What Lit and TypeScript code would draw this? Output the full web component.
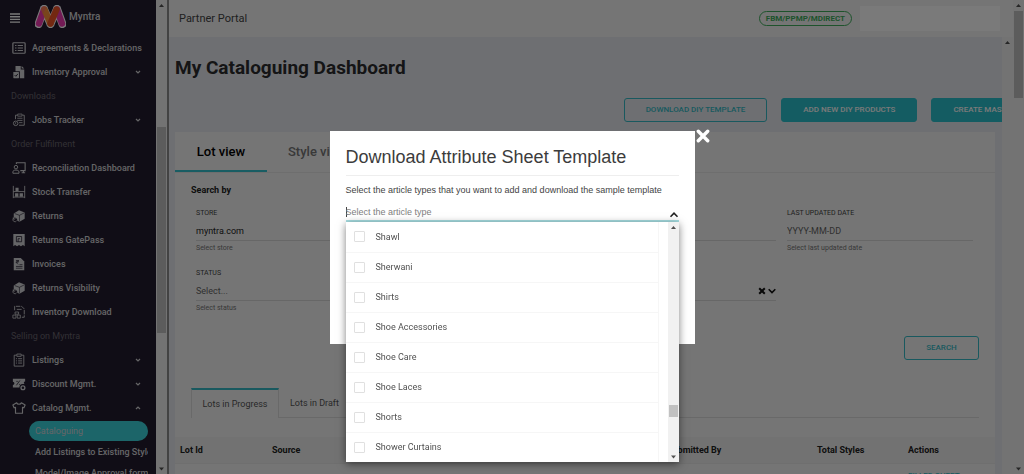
import { LitElement, html, svg, css, nothing } from "lit";
import { customElement, property } from "lit/decorators.js";

const icons: Record<string, unknown> = {
  list: svg`<rect x="1" y="2" width="14" height="12" rx="1" fill="none" stroke="currentColor" stroke-width="1.4"/><path d="M3.5 5.2h1.6M6.5 5.2h6M3.5 8h1.6M6.5 8h6M3.5 10.8h1.6M6.5 10.8h6" stroke="currentColor" stroke-width="1.3"/>`,
  approval: svg`<path d="M4 1h6v4h4v10H9V7H4z" fill="currentColor"/><path d="M11 1l3 3h-3z" fill="currentColor"/><rect x="1.5" y="8" width="6.5" height="7" rx=".6" fill="currentColor"/><path d="M3 11.5l1.4 1.4 2.4-2.8" fill="none" stroke="#231d2e"/>`,
  jobs: svg`<path d="M4 7V2.5h2M12 2.5h2V14H8" fill="none" stroke="currentColor"/><path d="M6.5 1.2h5v2.4h-5zM6 6h6M6 8.5h6M8 11h4" fill="none" stroke="currentColor" stroke-width=".9"/><circle cx="4.2" cy="11.8" r="2.6" fill="none" stroke="currentColor"/><path d="M4.2 10.4v1.6l-1.2.8" fill="none" stroke="currentColor" stroke-width=".8"/>`,
  board: svg`<path d="M5 3.5V2h10v9H9.5M11 13.5h4M13 11v2.5" fill="none" stroke="currentColor" stroke-width="1.2"/><circle cx="4.5" cy="7" r="2" fill="none" stroke="currentColor" stroke-width="1.1"/><path d="M1 14v-1.4c0-1.6 1.4-2.2 3.5-2.2S8 11 8 12.6V14z" fill="none" stroke="currentColor" stroke-width="1.1"/>`,
  stock: svg`<path d="M1.5 1v14M14.5 1v14M1.5 7.5h13M1.5 13.8h13" fill="none" stroke="currentColor" stroke-width="1"/><path d="M4 3h3.5v4H4zM3.5 9.5h3.8v3.8H3.5zM8.7 9.5h3.8v3.8H8.7z" fill="currentColor"/>`,
  box: svg`<path d="M2 5l6-3.5L14.5 4v7L8.5 14.5 6 13.5a3.4 3.4 0 0 0-4-4z" fill="currentColor"/><path d="M3 5.2l5.5 2 5.5-2.8M8.5 7.2v7" fill="none" stroke="#231d2e" stroke-width=".7"/><path d="M4.8 10.5a2.3 2.3 0 1 0 .4 3M1.5 9.5v2h2" fill="none" stroke="currentColor" stroke-width=".9"/>`,
  gate: svg`<path d="M1.5 1h13v14l-2-1.3-2.3 1.3L8 13.7 5.8 15l-2.3-1.3-2 1.3z" fill="currentColor"/><path d="M5 4h6v6H5zM7 10V6.5h2" fill="none" stroke="#231d2e" stroke-width=".9"/>`,
  invoice: svg`<path d="M2 1h8l4 4v10H2z" fill="currentColor"/><path d="M4.5 4h3.5M4.5 5.5h3.5M7 4c0 3-2.5 2-2.5 2L7 8.5M8.5 8.8h3.5M4.5 10.8h7.5M4.5 12.8h7.5" fill="none" stroke="#231d2e" stroke-width=".8"/>`,
  download: svg`<path d="M3 6V1.5h8l3 3V14h-3" fill="none" stroke="currentColor" stroke-width="1" stroke-dasharray="5 1"/><path d="M5.5 5h5.5" stroke="currentColor" stroke-width="1"/><path d="M3.5 8h4v2.5h-4zM1 11.5h3.5V15H1zM6 11.5h3.5V15H6z" fill="none" stroke="currentColor" stroke-width=".9"/>`,
  clip: svg`<path d="M5 2.5H2.5v12.5h11V2.5H11" fill="none" stroke="currentColor"/><path d="M5.5 1.2h5v2.6h-5z" fill="none" stroke="currentColor"/><path d="M4.5 6.5h1.2M7 6.5h4.5M4.5 9h1.2M7 9h4.5M4.5 11.5h1.2M7 11.5h4.5" stroke="currentColor"/>`,
  discount: svg`<path d="M1 2h14v3a1.5 1.5 0 0 0 0 3h-3a4 4 0 0 0-3.5 4H1V9a1.5 1.5 0 0 0 0-3.5z" fill="currentColor"/><path d="M5 9.5l4-5.5M5 5h1.5M8.2 8.5h1" stroke="#231d2e" stroke-width=".9"/><circle cx="12.5" cy="12.3" r="2.2" fill="none" stroke="currentColor" stroke-width="1.5"/>`,
  shirt: svg`<path d="M5.3 2L1 4.5l1.4 3.3L4 7.3V14h8V7.3l1.6.5L15 4.5 10.7 2C10 4.3 6 4.3 5.3 2z" fill="none" stroke="currentColor" stroke-width="1.3" stroke-linejoin="round"/>`,
};

type NavRow = { heading?: string; label?: string; icon?: string; chevron?: "down" | "up" };

const NAV: NavRow[] = [
  { label: "Agreements & Declarations", icon: "list" },
  { label: "Inventory Approval", icon: "approval", chevron: "down" },
  { heading: "Downloads" },
  { label: "Jobs Tracker", icon: "jobs", chevron: "down" },
  { heading: "Order Fulfilment" },
  { label: "Reconciliation Dashboard", icon: "board" },
  { label: "Stock Transfer", icon: "stock" },
  { label: "Returns", icon: "box" },
  { label: "Returns GatePass", icon: "gate" },
  { label: "Invoices", icon: "invoice" },
  { label: "Returns Visibility", icon: "box" },
  { label: "Inventory Download", icon: "download" },
  { heading: "Selling on Myntra" },
  { label: "Listings", icon: "clip", chevron: "down" },
  { label: "Discount Mgmt.", icon: "discount", chevron: "down" },
  { label: "Catalog Mgmt.", icon: "shirt", chevron: "up" },
];

const ARTICLES = [
  "Shawl", "Sherwani", "Shirts", "Shoe Accessories",
  "Shoe Care", "Shoe Laces", "Shorts", "Shower Curtains",
];

const chevron = (dir: "down" | "up") => html`
  <svg class="chevron" viewBox="0 0 8 8" aria-hidden="true">
    <path d=${dir === "down" ? "M2 3l2 2 2-2" : "M2 5l2-2 2 2"}
      fill="none" stroke="currentColor" stroke-width="1.2" />
  </svg>`;

const base = css`
  *, *::before, *::after { box-sizing: border-box; }
  a { color: inherit; text-decoration: none; }
  button, input { font: inherit; color: inherit; margin: 0; }
`;

@customElement("scroll-rail")
class ScrollRail extends LitElement {
  @property({ type: Number }) before = 0;
  @property({ type: Number }) thumb = 0;
  @property({ type: Number }) after = 1;
  @property({ type: Boolean }) down = false;

  static styles = css`
    :host { display: flex; flex-direction: column; width: 11px; flex: none; background: #f1f1f1; }
    svg { width: 11px; height: 11px; flex: none; fill: #505050; }
    .track { flex: 1; display: flex; flex-direction: column; padding: 0 1px; }
    .thumb { background: #c1c1c1; }
  `;

  render() {
    return html`
      <svg viewBox="0 0 11 11"><path d="M3 7l2.5-3L8 7z" /></svg>
      <div class="track">
        <div style="flex:${this.before}"></div>
        <div class="thumb" style="flex:${this.thumb}"></div>
        <div style="flex:${this.after}"></div>
      </div>
      ${this.down ? html`<svg viewBox="0 0 11 11"><path d="M3 4.5l2.5 3 2.5-3z" /></svg>` : nothing}`;
  }
}

@customElement("side-nav")
class SideNav extends LitElement {
  static styles = [base, css`
    :host { display: flex; min-height: 0; background: #231d2e; color: #d4d4d8; font-size: 9px; font-weight: 500; }
    nav { flex: 1; min-width: 0; overflow: hidden; }
    .brand { display: flex; align-items: center; height: 36px; padding: 0 0 4px 10px; font-size: 10px; }
    .menu { width: 10px; height: 10px; padding: 0; border: 0; background: none; display: flex; margin-top: 4px; }
    .menu svg { width: 10px; height: 10px; }
    .logo { width: 31px; height: 23px; margin: 0 3px 0 15px; }
    .row { display: flex; align-items: center; height: 24px; padding: 0 14px 0 12px; white-space: nowrap; }
    .row span { flex: 1; }
    .icon { width: 14px; height: 14px; margin-right: 6px; flex: none; }
    .chevron { width: 8px; height: 8px; }
    .heading { height: 24px; line-height: 24px; padding-left: 11px; color: #69646f; font-weight: 400; }
    .sub { padding: 1px 8px 0 29px; }
    .sub a { display: block; height: 20px; line-height: 20px; margin-bottom: 1px; padding-left: 6px; overflow: hidden; white-space: nowrap; }
    .sub a.active { border-radius: 10px; background: #3bd3dc; font-weight: 400; }
  `];

  render() {
    return html`
      <nav>
        <div class="brand">
          <button class="menu" aria-label="Menu">
            <svg viewBox="0 0 10 10"><path d="M0 1h10M0 3.7h10M0 6.4h10M0 9.1h10" stroke="#fff" stroke-width="1.4" /></svg>
          </button>
          <svg class="logo" viewBox="0 0 31 23" aria-hidden="true">
            <path d="M3.5 19L9 4M9 4l6.5 15M15.5 19L22 4M22 4l5.5 15" stroke="#fff" stroke-width="8" stroke-linecap="round" stroke-linejoin="round" fill="none" />
            <path d="M4 18.5L9 4.5" stroke="#f13ab1" stroke-width="6.4" stroke-linecap="round" />
            <path d="M27 18.5L22 4.5" stroke="#f13ab1" stroke-width="6.4" stroke-linecap="round" />
            <path d="M9.5 4.5L15.5 18.5" stroke="#fd913c" stroke-width="6.4" stroke-linecap="round" />
            <path d="M21.5 4.5L15.5 18.5" stroke="#f05524" stroke-width="6.4" stroke-linecap="round" />
            <path d="M6.5 4q2-3 5-1.5L8 9z" fill="#f9775a" />
          </svg>
          Myntra
        </div>
        ${NAV.map((r) => r.heading
          ? html`<div class="heading">${r.heading}</div>`
          : html`<a class="row" href="#">
              <svg class="icon" viewBox="0 0 16 16" aria-hidden="true">${icons[r.icon!]}</svg>
              <span>${r.label}</span>${r.chevron ? chevron(r.chevron) : nothing}
            </a>`)}
        <div class="sub">
          <a class="active" href="#">Cataloguing</a>
          <a href="#">Add Listings to Existing Styles</a>
          <a href="#">Model/Image Approval form</a>
        </div>
      </nav>
      <scroll-rail .before=${116} .thumb=${206} .after=${130} down></scroll-rail>`;
  }
}

@customElement("catalogue-dashboard")
class CatalogueDashboard extends LitElement {
  static styles = [base, css`
    :host { display: block; min-width: 0; overflow: hidden; padding: 0 7px 0 6px; background: #e6e9ee; font-size: 9px; color: #3a3a3a; }
    h1 { margin: 0; padding-top: 19px; font-size: 19px; line-height: 24px; font-weight: 700; color: #2c2c2e; }
    .actions { display: flex; justify-content: flex-end; gap: 14px; margin: 18px -43px 10px 0; }
    .btn { flex: none; height: 24px; padding: 0 21px 2px; border: 1px solid #35bac6; border-radius: 3px; background: none; color: #35bac6; font-size: 8px; font-weight: 500; white-space: nowrap; }
    .btn.solid { background: #2bc0cc; border-color: #2bc0cc; color: #fff; }
    .card { background: #f5f5f5; }
    .views { display: flex; border-bottom: 1px solid #e6e6e6; }
    .views button { height: 40px; padding: 0 21px; border: 0; border-bottom: 2px solid transparent; background: none; font-size: 13px; font-weight: 500; color: #777; }
    .views button.active { min-width: 92px; border-color: #35c3cf; color: #000; }
    form { padding: 10px 16px 0 16px; }
    h2 { margin: 0 0 12px; font-size: 9px; line-height: 14px; font-weight: 700; color: #222; }
    .fields { display: grid; grid-template-columns: repeat(4, 1fr); column-gap: 11px; padding: 0 6px 0 5px; }
    .field { height: 60px; }
    .field label { display: block; height: 9px; line-height: 9px; font-size: 7px; color: #444; }
    .control { display: flex; align-items: center; gap: 2px; height: 23px; padding-top: 4px; border-bottom: 1px solid #d8d8d8; color: #222; }
    .control input { flex: 1; min-width: 0; width: 100%; height: 18px; padding: 0; border: 0; background: none; outline: none; }
    .control input::placeholder { color: #666; opacity: 1; }
    .control svg { width: 8px; height: 8px; }
    .hint { height: 14px; line-height: 14px; font-size: 7px; color: #777; }
    .submit { display: flex; justify-content: flex-end; padding-top: 7px; }
    .submit .btn { width: 75px; }
    .lots { display: flex; height: 30px; margin: 28px 16px 19px 16px; border-bottom: 1px solid #dcdcdc; }
    .lots button { padding: 0 11px; border: 0; background: none; height: 30px; color: #555; }
    .lots button.active { padding: 0 9px; border: 1px solid #dcdcdc; border-top: 2px solid #35bac6; border-bottom: 0; background: #f5f5f5; width: 88px; }
    table { width: 100%; border-collapse: collapse; table-layout: fixed; }
    th { height: 26px; padding: 0 5px; background: #efefef; border-bottom: 1px solid #e8e8e8; text-align: left; font-weight: 700; color: #222; }
    td { padding: 5px; height: 24px; font-size: 8px; font-weight: 500; color: #35bac6; }
    .w-id { width: 92px; } .w-by { width: 150px; } .w-total { width: 91px; } .w-act { width: 92px; }
  `];

  render() {
    return html`
      <h1>My Cataloguing Dashboard</h1>
      <div class="actions">
        <button class="btn">DOWNLOAD DIY TEMPLATE</button>
        <button class="btn solid">ADD NEW DIY PRODUCTS</button>
        <button class="btn solid">CREATE MASTER</button>
      </div>
      <section class="card">
        <div class="views"><button class="active">Lot view</button><button>Style view</button></div>
        <form>
          <h2>Search by</h2>
          <div class="fields">
            <div class="field">
              <label for="store">STORE</label>
              <div class="control"><input id="store" value="myntra.com" /></div>
              <div class="hint">Select store</div>
            </div>
            <div class="field"></div>
            <div class="field">
              <label></label><div class="control"></div>
            </div>
            <div class="field">
              <label for="updated">LAST UPDATED DATE</label>
              <div class="control"><input id="updated" placeholder="YYYY-MM-DD" /></div>
              <div class="hint">Select last updated date</div>
            </div>
            <div class="field">
              <label for="status">STATUS</label>
              <div class="control"><input id="status" placeholder="Select..." /></div>
              <div class="hint">Select status</div>
            </div>
            <div class="field"></div>
            <div class="field">
              <label></label>
              <div class="control">
                <input aria-label="Filter" />
                <svg viewBox="0 0 8 8"><path d="M1.2 1.2l5.6 5.6M6.8 1.2L1.2 6.8" stroke="#111" stroke-width="2" /></svg>
                <svg viewBox="0 0 8 8"><path d="M.7 2.2L4 5.5l3.3-3.3" fill="none" stroke="#111" stroke-width="1.6" /></svg>
              </div>
            </div>
          </div>
          <div class="submit"><button class="btn" type="button">SEARCH</button></div>
        </form>
        <div class="lots"><button class="active">Lots in Progress</button><button>Lots in Draft</button></div>
        <table>
          <thead><tr>
            <th class="w-id">Lot Id</th><th>Source</th><th class="w-by">Submitted By</th>
            <th class="w-total">Total Styles</th><th class="w-act">Actions</th>
          </tr></thead>
          <tbody><tr><td></td><td></td><td></td><td></td><td><a href="#">FILLED SHEET</a></td></tr></tbody>
        </table>
      </section>`;
  }
}

@customElement("template-dialog")
class TemplateDialog extends LitElement {
  static styles = [base, css`
    :host { position: fixed; inset: 0; display: flex; align-items: center; justify-content: center; background: rgba(0, 0, 0, 0.52); font-size: 9px; }
    .dialog { position: relative; width: 365px; padding: 14px 16px 122px; background: #fff; color: #444; font-family: "Liberation Sans", Arial, sans-serif; }
    h2 { margin: 0; height: 31px; line-height: 24px; border-bottom: 1px solid #eee; font-size: 18px; font-weight: 400; color: #3c3c3c; white-space: nowrap; }
    p { margin: 0; padding-top: 8px; line-height: 12px; white-space: nowrap; }
    .close { position: absolute; left: 100%; top: -2px; width: 17px; height: 14px; padding: 0; border: 0; background: none; display: flex; justify-content: center; }
    .close svg { width: 14px; height: 14px; }
    .picker { position: relative; margin-top: 8px; }
    .search { display: flex; align-items: center; height: 18px; border-bottom: 2px solid #a8dfe3; }
    .caret { width: 1px; height: 10px; margin-right: -1px; background: #444; }
    .search input { flex: 1; min-width: 0; height: 16px; padding: 0; border: 0; outline: none; background: none; }
    .search input::placeholder { color: #808080; opacity: 1; }
    .search svg { width: 10px; height: 10px; align-self: flex-end; }
    .menu { position: absolute; top: 100%; left: 0; right: 0; display: flex; background: #fff; box-shadow: 0 2px 8px rgba(0, 0, 0, 0.5); font-family: Roboto, sans-serif; color: #505050; }
    ul { flex: 1; margin: 0 9px 0 0; padding: 0; list-style: none; border-right: 1px solid #f6f6f6; }
    li + li { border-top: 1px solid #f6f6f6; }
    label { display: flex; align-items: center; gap: 11px; height: 30px; padding-left: 8px; }
    li + li label { height: 29px; }
    input[type="checkbox"] { appearance: none; width: 11px; height: 11px; border: 1px solid #e0e0e0; border-radius: 1px; background: #fff; }
  `];

  render() {
    return html`
      <div class="dialog" role="dialog" aria-labelledby="title">
        <button class="close" aria-label="Close">
          <svg viewBox="0 0 14 14"><path d="M2.3 2.3l9.4 9.4M11.7 2.3l-9.4 9.4" stroke="#fff" stroke-width="3.4" stroke-linecap="round" /></svg>
        </button>
        <h2 id="title">Download Attribute Sheet Template</h2>
        <p>Select the article types that you want to add and download the sample template</p>
        <div class="picker">
          <div class="search">
            <i class="caret"></i><input placeholder="Select the article type" aria-label="Article type" />
            <svg viewBox="0 0 10 10"><path d="M1.5 6.7L5 3.2l3.5 3.5" fill="none" stroke="#222" stroke-width="1.6" /></svg>
          </div>
          <div class="menu">
            <ul>${ARTICLES.map((a) => html`<li><label><input type="checkbox" />${a}</label></li>`)}</ul>
            <scroll-rail .before=${172} .thumb=${12} .after=${33} down></scroll-rail>
          </div>
        </div>
      </div>`;
  }
}

@customElement("app-root")
class AppRoot extends LitElement {
  static styles = [base, css`
    :host { display: grid; grid-template-columns: 167px minmax(0, 1fr) 11px; height: 100vh; overflow: hidden; font-family: Roboto, sans-serif; }
    main { display: flex; flex-direction: column; min-width: 0; min-height: 0; border-left: 2px solid #8c8c8c; }
    header { display: flex; align-items: center; flex: none; height: 37px; padding: 0 13px 0 10px; background: #f5f5f5; font-size: 11px; color: #444; }
    header span { flex: 1; }
    .program { height: 15px; padding: 0 6px; border: 1px solid #3fae5c; border-radius: 8px; line-height: 13px; font-size: 8px; font-weight: 700; color: #3fae5c; }
    .account { width: 140px; height: 25px; margin-left: 8px; background: #fff; }
    .body { flex: 1; min-height: 0; display: flex; }
    .body catalogue-dashboard { flex: 1; }
  `];

  render() {
    return html`
      <side-nav></side-nav>
      <main>
        <header><span>Partner Portal</span><div class="program">FBM/PPMP/MDIRECT</div><div class="account"></div></header>
        <div class="body"><catalogue-dashboard></catalogue-dashboard><scroll-rail></scroll-rail></div>
      </main>
      <scroll-rail .before=${0} .thumb=${87} .after=${365} down></scroll-rail>
      <template-dialog></template-dialog>`;
  }
}
